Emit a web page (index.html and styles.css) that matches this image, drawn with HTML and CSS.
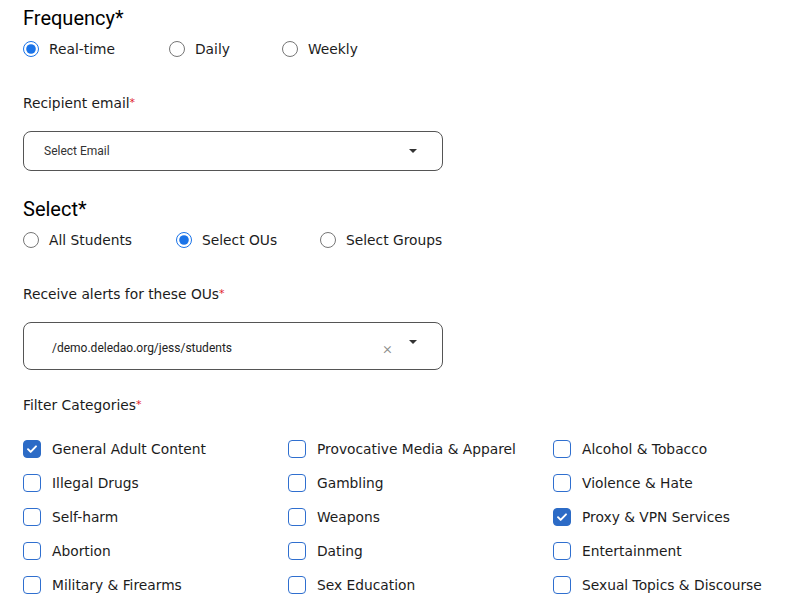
FILE: index.html
```html
<!DOCTYPE html>
<html lang="en">

<head>
    <meta charset="UTF-8">
    <meta name="viewport" content="width=device-width, initial-scale=1.0">
    <title>Alert Settings</title>
    <link rel="stylesheet" href="styles.css">
</head>

<body>
    <form class="alert-form">
        <!-- 빈도 -->
        <h2 class="section-title">Frequency*</h2>
        <div class="radio-group freq-group">
            <label class="radio-item"><input type="radio" name="frequency" checked>Real-time</label>
            <label class="radio-item"><input type="radio" name="frequency">Daily</label>
            <label class="radio-item"><input type="radio" name="frequency">Weekly</label>
        </div>

        <!-- 수신 이메일 -->
        <div class="field-label">Recipient email<span class="required">*</span></div>
        <div class="select-box">
            <span class="select-value placeholder">Select Email</span>
            <span class="select-arrow"></span>
        </div>

        <!-- 대상 선택 -->
        <h2 class="section-title">Select*</h2>
        <div class="radio-group scope-group">
            <label class="radio-item"><input type="radio" name="scope">All Students</label>
            <label class="radio-item"><input type="radio" name="scope" checked>Select OUs</label>
            <label class="radio-item"><input type="radio" name="scope">Select Groups</label>
        </div>

        <div class="field-label">Receive alerts for these OUs<span class="required">*</span></div>
        <div class="select-box tall">
            <span class="select-value chip">/demo.deledao.org/jess/students</span>
            <span class="select-clear">&times;</span>
            <span class="select-arrow raised"></span>
        </div>

        <!-- 필터 카테고리 -->
        <div class="field-label">Filter Categories<span class="required">*</span></div>
        <div class="category-grid">
            <label class="check-item checked"><span class="check-box"></span>General Adult Content</label>
            <label class="check-item"><span class="check-box"></span>Provocative Media &amp; Apparel</label>
            <label class="check-item"><span class="check-box"></span>Alcohol &amp; Tobacco</label>

            <label class="check-item"><span class="check-box"></span>Illegal Drugs</label>
            <label class="check-item"><span class="check-box"></span>Gambling</label>
            <label class="check-item"><span class="check-box"></span>Violence &amp; Hate</label>

            <label class="check-item"><span class="check-box"></span>Self-harm</label>
            <label class="check-item"><span class="check-box"></span>Weapons</label>
            <label class="check-item checked"><span class="check-box"></span>Proxy &amp; VPN Services</label>

            <label class="check-item"><span class="check-box"></span>Abortion</label>
            <label class="check-item"><span class="check-box"></span>Dating</label>
            <label class="check-item"><span class="check-box"></span>Entertainment</label>

            <label class="check-item"><span class="check-box"></span>Military &amp; Firearms</label>
            <label class="check-item"><span class="check-box"></span>Sex Education</label>
            <label class="check-item"><span class="check-box"></span>Sexual Topics &amp; Discourse</label>
        </div>
    </form>
</body>

</html>
```

FILE: styles.css
```css
body {
    margin: 0;
    background-color: #ffffff;
    color: #1c1c1c;
    font-family: "DejaVu Sans", "Noto Sans", sans-serif;
    overflow: hidden;
}

.alert-form {
    display: flex;
    flex-direction: column;
    align-items: flex-start;
    padding: 6px 0 0 23px;
}

/* 섹션 제목 */
.section-title {
    margin: 0;
    font-family: Roboto, "Liberation Sans", sans-serif;
    font-size: 20px;
    font-weight: 400;
    line-height: 24px;
    color: #000000;
}

/* 라디오 버튼 */
.radio-group {
    display: grid;
    margin-top: 7px;
    margin-bottom: 32px;
    height: 24px;
    align-items: center;
}

.freq-group {
    grid-template-columns: 146px 113px auto;
}

.scope-group {
    grid-template-columns: 153px 144px auto;
}

.radio-item {
    display: flex;
    align-items: center;
    gap: 10px;
    font-size: 13.8px;
    cursor: pointer;
}

.radio-item input {
    width: 16px;
    height: 16px;
    margin: 0;
    accent-color: #1a73e8;
}

/* 필드 라벨 */
.field-label {
    font-size: 13.8px;
    line-height: 20px;
}

.required {
    color: #e0202a;
    font-size: 11px;
    vertical-align: top;
}

/* 셀렉트 박스 */
.select-box {
    box-sizing: border-box;
    display: flex;
    align-items: center;
    width: 420px;
    height: 40px;
    margin-top: 18px;
    margin-bottom: 26px;
    padding: 0 20px;
    border: 1px solid #555555;
    border-radius: 8px;
    font-family: Roboto, "Liberation Sans", sans-serif;
}

.select-box.tall {
    height: 48px;
    margin-bottom: 25px;
    padding-left: 28px;
}

.select-value {
    flex: 1;
    font-size: 12px;
    color: #333333;
}

.select-value.chip {
    margin-top: 4px;
    font-size: 12px;
    color: #222222;
}

.select-clear {
    margin-right: 17px;
    margin-top: 3px;
    font-size: 17px;
    font-weight: 300;
    color: #8a8a8a;
}

.select-arrow {
    width: 0;
    height: 0;
    margin-right: 5px;
    border-left: 4px solid transparent;
    border-right: 4px solid transparent;
    border-top: 4px solid #333333;
}

.select-arrow.raised {
    margin-bottom: 8px;
}

/* 카테고리 체크박스 */
.category-grid {
    display: grid;
    grid-template-columns: 265px 265px auto;
    grid-auto-rows: 34px;
    margin-top: 17px;
}

.check-item {
    display: flex;
    align-items: center;
    gap: 11px;
    font-size: 13.8px;
    cursor: pointer;
}

.check-box {
    box-sizing: border-box;
    width: 18px;
    height: 18px;
    border: 1.5px solid #2f6fcf;
    border-radius: 4px;
    background-color: #ffffff;
}

.check-item.checked .check-box {
    background-color: #2c6bc6;
    border-color: #2c6bc6;
    background-image: url("data:image/svg+xml,%3Csvg xmlns='http://www.w3.org/2000/svg' viewBox='0 0 18 18'%3E%3Cpath d='M4.5 9.2l3 3 6-6.2' fill='none' stroke='white' stroke-width='2.2' stroke-linecap='round' stroke-linejoin='round'/%3E%3C/svg%3E");
    background-size: 100% 100%;
}
```
